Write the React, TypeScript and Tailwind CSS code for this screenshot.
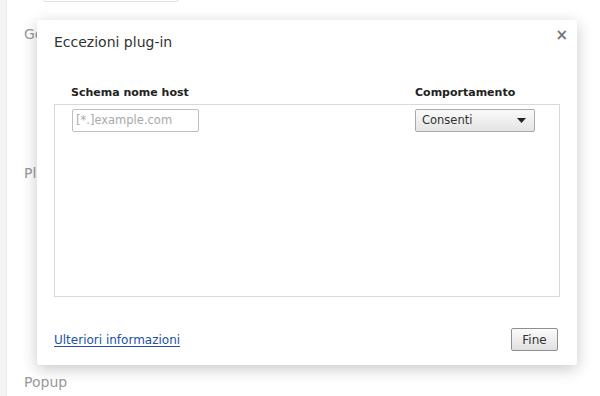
import React from 'react';

const font = { fontFamily: '"DejaVu Sans", "Liberation Sans", sans-serif' };

export default function App() {
  return (
    <div className="relative w-[600px] h-[396px] overflow-hidden bg-white flex" style={font}>
      {/* page behind the overlay */}
      <div className="w-[7px] bg-[#f4f4f4] border-r border-[#ececec]" />
      <div className="flex-1 relative">
        <div className="ml-[36px] w-[136px] h-[3px] border border-t-0 border-[#e2e2e2] rounded-b-[3px] -mt-px" />
        <div className="pl-[17px] pt-[22px] text-[14px] text-[#999]">Ge</div>
        <div className="pl-[17px] pt-[118px] text-[14px] text-[#999]">Pl</div>
        <div className="pl-[17px] pt-[188px] text-[14px] text-[#999]">Popup</div>
      </div>

      {/* overlay dialog */}
      <div className="absolute left-[37px] top-[20px] w-[540px] h-[345px] bg-white rounded-[3px] shadow-[0_4px_16px_rgba(0,0,0,0.22)] flex flex-col px-[17px]">
        <button className="absolute right-[9px] top-[8px] text-[#777] text-[15px] font-bold leading-none">×</button>
        <h1 className="pt-[12px] text-[14px] text-[#333] leading-[20px]">Eccezioni plug-in</h1>
        <div className="mt-[33px] flex text-[11px] font-bold text-[#222] leading-[16px]">
          <div className="pl-[17px] w-[361px]">Schema nome host</div>
          <div>Comportamento</div>
        </div>
        <div className="mt-[3px] h-[193px] border border-[#d9d9d9] flex items-start pt-[4px]">
          <div className="pl-[17px] w-[360px]">
            <div className="w-[127px] h-[23px] border border-[#bfbfbf] rounded-[2px] text-[11.5px] text-[#a9a9a9] flex items-center px-[3px]">[*.]example.com</div>
          </div>
          <div className="w-[120px] h-[23px] border border-[#aaa] rounded-[2px] bg-gradient-to-b from-[#fafafa] to-[#e4e4e4] flex items-center justify-between pl-[6px] pr-[8px] text-[11.5px] text-[#333]">
            <span>Consenti</span>
            <svg width="9" height="5" viewBox="0 0 9 5"><path d="M0 0h9L4.5 5z" fill="#222" /></svg>
          </div>
        </div>
        <div className="mt-auto mb-[14px] flex items-center justify-between">
          <a className="text-[12px] text-[#2250a8] underline underline-offset-2">Ulteriori informazioni</a>
          <button className="w-[47px] h-[23px] mr-[2px] border border-[#8f8f8f] rounded-[2px] bg-gradient-to-b from-[#fbfbfb] to-[#e0e0e0] text-[12px] text-[#333]">Fine</button>
        </div>
      </div>
    </div>
  );
}
